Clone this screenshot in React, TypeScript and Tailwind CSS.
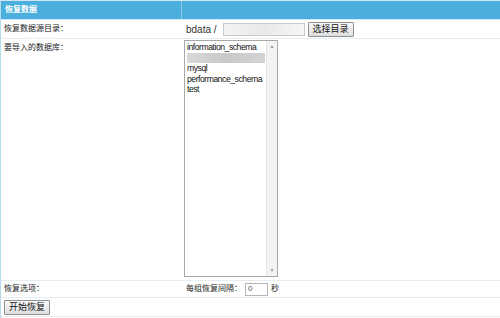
import React from 'react';

const DATABASES = ['information_schema', '', 'mysql', 'performance_schema', 'test'];

function Btn({ label }: { label: string }) {
  return (
    <button className="h-[15px] px-[4px] border border-[#8f8f8f] bg-gradient-to-b from-[#fbfbfb] to-[#dedede] text-[9px] leading-none text-[#111] rounded-[1px]">
      {label}
    </button>
  );
}

export default function App() {
  return (
    <div
      className="w-[500px] h-[318px] bg-white text-[8px] text-[#222] overflow-hidden border-l border-[#b7dcee]"
      style={{ fontFamily: '"Liberation Sans", "Noto Sans CJK SC", sans-serif' }}
    >
      <div className="grid grid-cols-[181px_1fr] h-[20px] bg-[#4aafdd] border-t border-[#a6d6ec] border-b border-[#cfe7f3]">
        <div className="flex items-center pl-[4px] font-bold text-white border-r border-[#8fcbe6]">恢复数据</div>
        <div />
      </div>

      <div className="grid grid-cols-[181px_1fr] h-[19px] border-b border-[#e3eff5]">
        <div className="flex items-center pl-[3px]">恢复数据源目录：</div>
        <div className="flex items-center pl-[4px]">
          <span className="text-[10px] text-[#333] mr-[6px]">bdata /</span>
          <div className="w-[82px] h-[13px] mr-[3px] border border-[#c9c9c9] bg-gradient-to-r from-[#f4f4f4] via-[#e9e9e9] to-[#f6f6f6]" />
          <Btn label="选择目录" />
        </div>
      </div>

      <div className="grid grid-cols-[181px_1fr] h-[242px] border-b border-[#e3eff5]">
        <div className="pl-[3px] pt-[3px]">要导入的数据库：</div>
        <div className="pl-[2px] pt-[1px] pb-[3px]">
          <div className="flex w-[94px] h-full border border-[#a8a8a8]">
            <div className="flex-1 pt-[1px] pl-[2px] text-[8.6px] tracking-[-0.45px] leading-[10.5px] overflow-hidden">
              {DATABASES.map((db, i) =>
                db ? (
                  <div key={i} className="whitespace-nowrap text-[#111]">{db}</div>
                ) : (
                  <div key={i} className="h-[10.5px] mr-[1px] bg-gradient-to-r from-[#d9d9d9] via-[#c8c8c8] to-[#d3d3d3]" />
                )
              )}
            </div>
            <div className="w-[11px] flex flex-col justify-between bg-[#f3f3f3] border-l border-[#e6e6e6] text-[#9a9a9a] text-[5px] leading-none items-center py-[3px]">
              <span>▲</span>
              <span>▼</span>
            </div>
          </div>
        </div>
      </div>

      <div className="grid grid-cols-[181px_1fr] h-[17px] border-b border-[#e3eff5]">
        <div className="flex items-center pl-[3px]">恢复选项：</div>
        <div className="flex items-center pl-[4px] gap-[3px]">
          <span>每组恢复间隔：</span>
          <div className="w-[23px] h-[13px] border border-[#b5b5b5] flex items-center pl-[2px] text-[#555]">0</div>
          <span>秒</span>
        </div>
      </div>

      <div className="h-[19px] flex items-center pl-[3px] border-b border-[#e3eff5]">
        <Btn label="开始恢复" />
      </div>
    </div>
  );
}
